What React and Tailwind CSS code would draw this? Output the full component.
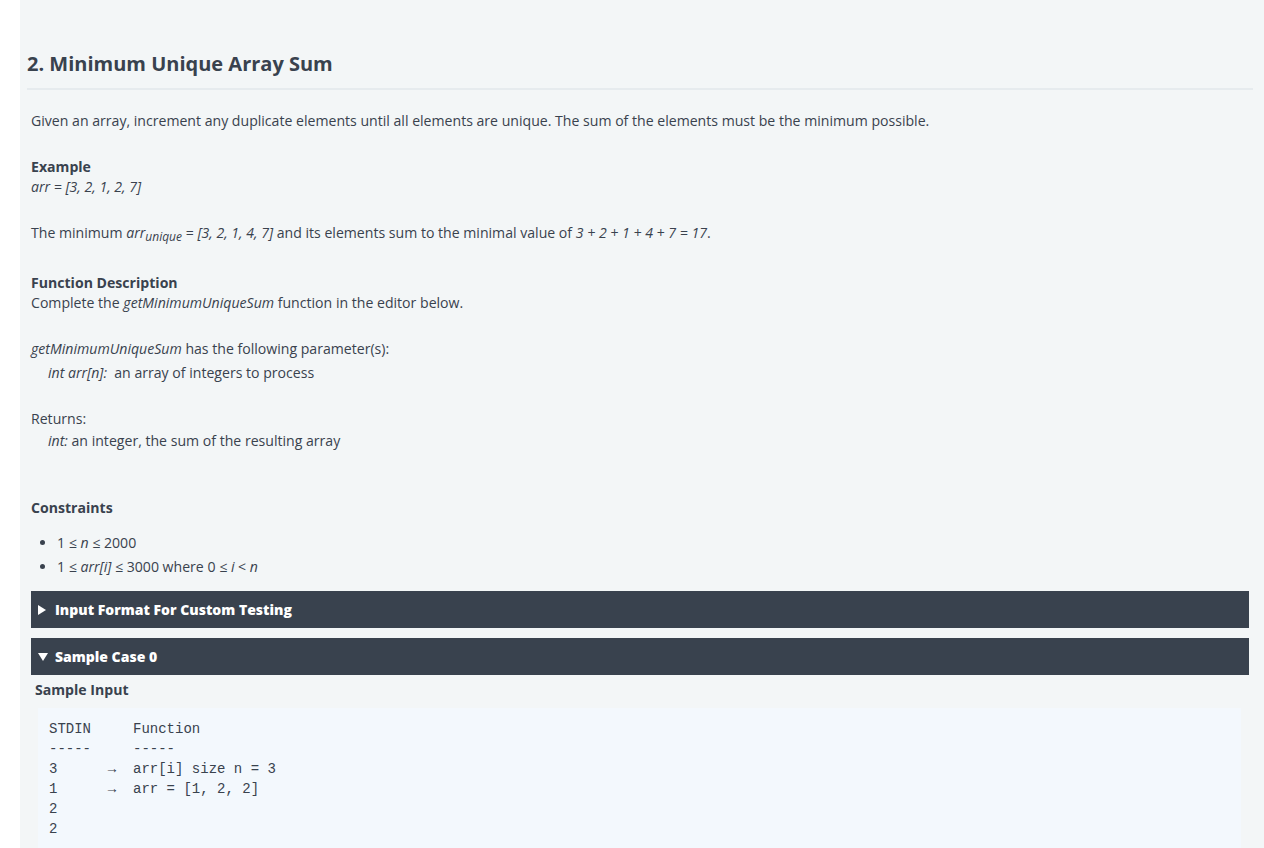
import React from 'react';

const Caret = ({ open }) =>
    open ? (
        <svg width="10" height="8" viewBox="0 0 10 8" className="mr-[7px]">
            <path d="M0 0 H10 L5 8 Z" fill="currentColor" />
        </svg>
    ) : (
        <svg width="8" height="10" viewBox="0 0 8 10" className="mr-[9px]">
            <path d="M0 0 V10 L8 5 Z" fill="currentColor" />
        </svg>
    );

const Bar = ({ open, children }) => (
    <div className="bg-[#39424e] text-white font-extrabold text-[14px] h-[37px] flex items-center px-[7px]">
        <Caret open={open} />
        <span>{children}</span>
    </div>
);

const App = () => {
    return (
        <div className="min-h-screen bg-white pl-[20px] font-['Open_Sans',sans-serif] text-[#39424e]">
            <div className="bg-[#f3f6f7] min-h-[848px] pt-[50px] pl-[7px] pr-[11px]">
                <h1 className="text-[20px] leading-[28px] font-bold pb-[10px] border-b-2 border-[#e6ebee]">
                    2. Minimum Unique Array Sum
                </h1>

                <div className="pl-[4px] pt-[21px] text-[14.1px] leading-[20px]">
                    <p>Given an array, increment any duplicate elements until all elements are unique. The sum of the elements must be the minimum possible.</p>

                    <p className="mt-[26px] font-bold">Example</p>
                    <p><em>arr = [3, 2, 1, 2, 7]</em></p>

                    <p className="mt-[26px]">
                        The minimum <em>arr<sub className="text-[12px]">unique</sub></em> = <em>[3, 2, 1, 4, 7]</em> and its elements sum to the minimal value of <em>3 + 2 + 1 + 4 + 7 = 17</em>.
                    </p>

                    <p className="mt-[30px] font-bold">Function Description</p>
                    <p>Complete the <em>getMinimumUniqueSum</em> function in the editor below.</p>

                    <p className="mt-[26px]"><em>getMinimumUniqueSum</em> has the following parameter(s):</p>
                    <p className="mt-[4px] pl-[17px]"><em>int arr[n]:</em>&nbsp; an array of integers to process</p>

                    <p className="mt-[26px]">Returns:</p>
                    <p className="mt-[2px] pl-[17px]"><em>int:</em> an integer, the sum of the resulting array</p>

                    <p className="mt-[47px] font-bold">Constraints</p>
                    <ul className="mt-[15px] list-disc pl-[26px] space-y-[4px]">
                        <li>1 ≤ <em>n</em> ≤ 2000</li>
                        <li>1 ≤ <em>arr[i]</em> ≤ 3000 where 0 ≤ <em>i</em> &lt; <em>n</em></li>
                    </ul>

                    <div className="mt-[14px] mr-[4px] flex flex-col gap-[10px]">
                        <Bar>Input Format For Custom Testing</Bar>
                        <Bar open>Sample Case 0</Bar>
                    </div>

                    <p className="pl-[4px] mt-[5px] font-bold">Sample Input</p>
                    <pre className="mt-[8px] ml-[7px] mr-[12px] bg-[#f3f8fd] px-[11px] pt-[11px] pb-[20px] font-['Liberation_Mono',monospace] text-[14px] leading-[20px] text-[#39424e]">
{`STDIN     Function
-----     -----
3      →  arr[i] size n = 3
1      →  arr = [1, 2, 2]
2
2`}
                    </pre>
                </div>
            </div>
        </div>
    );
};

export default App;
